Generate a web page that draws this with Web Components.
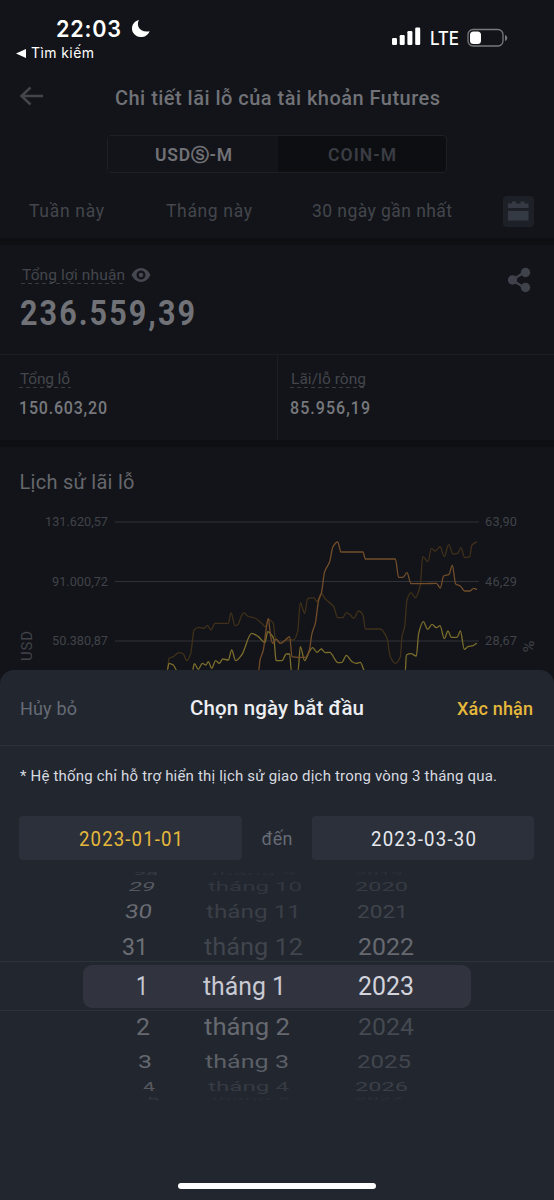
<!DOCTYPE html>
<html lang="vi">
<head>
<meta charset="utf-8">
<title>Chi tiết lãi lỗ</title>
<style>
html,body{margin:0;background:#121419}
body{width:554px;height:1200px;overflow:hidden;font-family:Roboto,"Noto Sans",sans-serif}
</style>
</head>
<body>
<pnl-app></pnl-app>
<script>
/* Single-line label. size/weight/color style it; w fits its advance width,
   by tracking or (with "stretch") by horizontal scaling; narrow condenses
   the glyphs before tracking. */
class UiText extends HTMLElement{
  connectedCallback(){
    const a=(n,d)=>this.getAttribute(n)||d;
    const root=this.attachShadow({mode:'open'});
    root.innerHTML=`<style>
      :host{display:block;flex:none;white-space:nowrap;line-height:1.2;font-size:${a('size','16')}px;font-weight:${a('weight','400')};color:${a('color','#707177')};font-family:${a('font','Roboto')},"Noto Sans","DejaVu Sans",sans-serif;width:max-content}
      span{display:inline-block;transform-origin:0 50%}
    </style><span><slot></slot></span>`;
    const s=root.querySelector('span'),w=+a('w',0),m=s.getBoundingClientRect().width;
    const n=this.textContent.length,k=+a('narrow',1);
    if(this.hasAttribute('stretch')){
      s.style.transform=`skewX(${a('skew','0')}deg) scale(${w?w/m:1},${a('sy','1')})`;
    }else if(w&&n>1){
      s.style.letterSpacing=(w/k-m)/(n-1)+'px';
      if(k!==1)s.style.transform=`scaleX(${k})`;
      this.style.width=w+'px';
    }
  }
}
customElements.define('ui-text',UiText);

const define=(name,css,html)=>customElements.define(name,class extends HTMLElement{
  constructor(){super();this.attachShadow({mode:'open'}).innerHTML=`<style>*{box-sizing:border-box}${css}</style>${html}`;}
});

define('status-bar',`
:host{display:block;height:66px}
.top{display:flex;height:45px;padding:12px 46px 0 56px;align-items:center}
.top svg{display:block}
.gap{flex:1}
.back{display:flex;align-items:center;padding-left:16px;height:17px;gap:5px}
`,`<div class="top">
<ui-text size="22.500" weight="600" font="Inter" color="#fff" w="65" narrow=".96">22:03</ui-text>
<svg width="20" height="20" viewBox="0 0 20 20" style="margin-left:10px"><path d="M8 1C5 6 8 14 18.7 12.2C16.5 17 12.5 18.3 9.4 18C4.5 17.6 1 14 1 9.5C1 5.500 3.500 2 8 1Z" fill="#fff"/></svg>
<div class="gap"></div>
<svg width="30" height="20" viewBox="0 0 30 20" style="margin:17px 0 0" fill="#fff"><rect x="0" y="11" width="5" height="7" rx="1.2"/><rect x="7.700" y="8" width="5" height="10" rx="1.2"/><rect x="15.400" y="4" width="5" height="14" rx="1.2"/><rect x="23.200" y="0.500" width="5" height="17.500" rx="1.2"/></svg>
<ui-text size="18.500" font="Inter" weight="500" color="#fff" w="29" narrow=".92" style="margin:20px 0 0 8px">LTE</ui-text>
<svg width="42" height="20" viewBox="0 0 42 20" style="margin:18px -1px 0 8px"><rect x="1" y="1.500" width="35" height="16.500" rx="5" fill="none" stroke="#77787c" stroke-width="1.300"/><rect x="3" y="3.500" width="11" height="12.500" rx="3.500" fill="#fff"/><path d="M38 7c3 1 3 5 0 6z" fill="#77787c"/></svg>
</div>
<div class="back"><svg width="10" height="9" viewBox="0 0 10 9"><path d="M0 4.500L10 0V9Z" fill="#fff"/></svg>
<ui-text size="14" font="Inter" weight="400" color="#fff" w="63">Tìm kiếm</ui-text></div>`);

define('nav-bar',`
:host{display:grid;grid-template-columns:115px auto 1fr;height:64px;align-items:center}
svg{display:block;margin-left:19px}
`,`<svg width="26" height="20" viewBox="0 0 26 20" style="margin-top:-4px" fill="none" stroke="#44454a" stroke-width="2.500"><path d="M24 10H3M11.500 1.500L2.500 10L11.500 18.500"/></svg>
<ui-text size="20" color="#717277" weight="500" w="325">Chi tiết lãi lỗ của tài khoản Futures</ui-text>`);

define('market-switch',`
:host{display:grid;grid-template-columns:170px 170px;width:340px;height:38px;margin:5px 0 0 107px;border:1px solid #1e2026;border-radius:4px;background:#0d0e12;overflow:hidden}
div{display:flex;align-items:center;justify-content:center;padding-top:2px}
.on{background:#131419}
`,`<div class="on"><ui-text size="17.500" weight="600" color="#707176" w="77" style="margin-left:1px">USDⓈ-M</ui-text></div><div><ui-text size="17.500" weight="600" color="#3b3d44" w="68" style="margin-right:2px">COIN-M</ui-text></div>`);

define('period-tabs',`
:host{display:grid;grid-template-columns:137px 146px 191px 31px;height:65px;padding:11px 0 0 29px;align-items:center;box-sizing:border-box}
svg{display:block}
`,`<ui-text size="17.500" color="#44464c" w="75">Tuần này</ui-text><ui-text size="17.500" color="#44464c" w="86">Tháng này</ui-text><ui-text size="17.500" color="#44464c" w="140">30 ngày gần nhất</ui-text>
<svg width="31" height="31" viewBox="0 0 31 31"><rect width="31" height="31" rx="4" fill="#1d2027"/><path d="M5 12V7.500H9V5.500H13V7.500H17.500V5.500H21.500V7.500H25.500V12ZM5 15H25.500V24.500H5Z" fill="#353943"/></svg>`);

define('dash-label',`
:host{display:block;width:max-content;padding:0 1px;height:18px;background:repeating-linear-gradient(90deg,#3a3c42 0 4px,transparent 4px 7px) 0 100%/100% 1px no-repeat}
`,`<slot></slot>`);

define('profit-panel',`
:host{display:block;height:209px;box-sizing:border-box;border-top:7px solid #0e0f13;border-bottom:7px solid #0e0f13}
.total{height:109px;display:flex;justify-content:space-between;padding:21px 23px 0 21px}
.lab{display:flex;gap:5px;align-items:center;height:18px}
.cells{display:grid;grid-template-columns:277px 1fr;border-top:1px solid #1b1d22;height:86px}
.cells>div{padding:15px 0 0 19px}
.cells>div+div{border-left:1px solid #1b1d22;padding-left:12px}
.v{margin-top:9px}
svg{display:block}
`,`<div class="total"><div><div class="lab"><dash-label><ui-text size="15.500" color="#44464c" w="103">Tổng lợi nhuận</ui-text></dash-label>
<svg width="20" height="16" viewBox="0 0 20 16"><path fill-rule="evenodd" d="M0.500 8Q4 1 10 1T19.500 8Q16 15 10 15T0.500 8ZM10 3.500A4.500 4.500 0 1 0 10 12.500A4.500 4.500 0 1 0 10 3.500Z" fill="#454850"/><circle cx="10" cy="8" r="2.300" fill="#454850"/></svg></div>
<ui-text size="35.500" weight="700" color="#717277" w="175" narrow=".86" style="margin:8px 0 0 -1px">236.559,39</ui-text></div>
<svg width="24" height="26" viewBox="0 0 24 26" style="margin-top:1px" fill="#3f424a"><path d="M5 13L18 5M5 13L18 21" stroke="#3f424a" stroke-width="2.500"/><circle cx="5.500" cy="13" r="4.700"/><circle cx="18.500" cy="5.500" r="4.700"/><circle cx="18.500" cy="20.500" r="4.700"/></svg></div>
<div class="cells"><div><dash-label><ui-text size="15.500" color="#44464c" w="50">Tổng lỗ</ui-text></dash-label><ui-text class="v" size="17.800" weight="500" color="#77787d" w="88" narrow=".9">150.603,20</ui-text></div>
<div><dash-label><ui-text size="15.500" color="#44464c" w="75">Lãi/lỗ ròng</ui-text></dash-label><ui-text class="v" size="17.800" weight="500" color="#77787d" w="80" narrow=".9">85.956,19</ui-text></div></div>`);

/* Series are stored at three units per pixel, in runs that share an origin. */
const SERIES=[
 ['#40301a',[[[0,450],'502,660 507,625 520,620 537,608 550,612 560,632 572,612 577,575 582,540 597,532 613,535 622,526 633,540 645,520 665,520 685,520 693,488 705,527 715,522 724,498 732,488 742,498 765,504 785,520 797,530 805,508 820,520 825,560'],[[277,500],'0,418 10,430 30,420 50,420 62,395 70,308 83,340 92,296 110,293 120,305 133,280 145,297 170,320 182,353 197,353 208,338 220,345 230,355 245,333 258,345 265,387 290,387 310,387 330,415 340,470 355,490 370,470 375,410 383,380 390,300 402,278 415,293 430,255 437,170 453,185 463,145 475,153 489,140 502,170 515,133 528,162 542,160 552,143 563,173 578,170 585,135 600,126']]],
 ['#7c6d2c',[[[0,450],'502,660 507,640 520,645 530,660'],[[0,0],''],[[0,450],'578,660 583,641 595,658 607,640 618,645 625,635 635,655 647,632 658,640 668,627 685,630 695,600 707,632 725,615 755,550 775,560 795,578 803,545 815,555 822,570 828,630'],[[277,500],'0,482 15,482 28,462 38,462 43,512'],[[0,0],''],[[277,500],'63,512 70,440 83,482 97,455 107,443 120,457 133,447 145,458 158,457 183,488 195,487 208,466 225,485 238,490 250,487 263,512'],[[0,0],''],[[277,500],'385,512 388,465 402,461 418,468 425,400 439,365 452,388 465,373 478,383 489,377 502,416 513,393 523,412 540,412 550,393 562,448 573,440 588,437 600,430']]],
 ['#724d29',[[[0,450],'776,662 780,630 790,600 798,540 805,505 812,560 818,580 828,568'],[[277,500],'10,430 25,420 38,410 45,470 65,472 85,472 97,450 105,400 115,370 125,300 133,280 143,215 158,185 168,140 182,126 192,156 225,156 258,156 265,177 310,177 355,177 365,232 378,232 390,218 402,251 440,251 478,250 490,264 500,228 516,223 526,196 536,252 550,258 563,273 578,273 590,265 600,268']]]
];
function curve(runs){
  const parts=[[]];
  for(const [o,t] of runs){
    if(!t){parts.push([]);continue;}
    for(const p of t.split(' ')){const [x,y]=p.split(',').map(Number);parts[parts.length-1].push([o[0]+x/3,o[1]+y/3]);}
  }
  return parts.map(p=>{
    const tan=i=>{
      if(i===0||i===p.length-1)return 0;
      const a=(p[i][1]-p[i-1][1])/(p[i][0]-p[i-1][0]),b=(p[i+1][1]-p[i][1])/(p[i+1][0]-p[i][0]);
      return a*b<=0?0:2*a*b/(a+b);
    };
    let d=`M${p[0]}`;
    for(let i=1;i<p.length;i++){
      const h=(p[i][0]-p[i-1][0])/3;
      d+=`C${p[i-1][0]+h},${p[i-1][1]+h*tan(i-1)} ${p[i][0]-h},${p[i][1]-h*tan(i)} ${p[i]}`;
    }
    return d;
  }).join('');
}

define('pnl-chart',`
:host{display:block;height:223px}
.title{height:53px;padding:22.500px 0 0 19.500px}
svg{display:block}
text{font-family:Roboto,sans-serif;font-size:12.700px;fill:#414349}
`,`<div class="title"><ui-text size="20" color="#66676c" w="115">Lịch sử lãi lỗ</ui-text></div>
<svg width="554" height="170" viewBox="0 500 554 170">
<path d="M115 522H479M115 581.500H479M115 641H479" stroke="#303238" stroke-width="1.100"/>
<g>${SERIES.map(([c,r])=>`<path d="${curve(r)}" fill="none" stroke="${c}" stroke-width="1.300"/>`).join('')}</g>
<text x="45" y="526.200" textLength="63">131.620,57</text><text x="52" y="585.700" textLength="56">91.000,72</text><text x="52" y="645" textLength="56">50.380,87</text>
<text x="485" y="526.200" textLength="32">63,90</text><text x="485" y="585.700" textLength="32">46,29</text><text x="485" y="645" textLength="32">28,67</text>
<text transform="translate(32 661) rotate(-90)" style="font-size:15px" textLength="30">USD</text>
<text transform="translate(533.500 652.500) rotate(-90)" style="font-size:14.500px" textLength="12" lengthAdjust="spacingAndGlyphs">%</text>
</svg>`);

define('date-field',`
:host{display:flex;align-items:center;justify-content:center;height:44px;border-radius:4px;background:#2b303b;padding-top:2px;box-sizing:border-box}
`,`<slot></slot>`);

/* Wheel rows: height, vertical scale, then [text, left, width, colour, skew] per column. */
const ROWS=[
 [6,.16,['28',134,24,'#3b3f47',-25],['tháng 9',211,85,'#2a2e36',0],['2019',355,48,'#2d3139',0]],
 [20,.5,['29',129,26,'#555860',-20],['tháng 10',208,94,'#333740',0],['2020',355,53,'#373b43',0]],
 [30,.77,['30',125,27,'#6a6c74',-8],['tháng 11',206,95,'#3b3f47',0],['2021',357,51,'#40444c',0]],
 [40,.96,['31',122,26,'#6b6e75',0],['tháng 12',204,99,'#41454d',0],['2022',358,56,'#666970',0]],
 [40,1.03,['1',136,12,'#c8c9d2',0],['tháng 1',203,83,'#c8c9d2',0],['2023',358,56,'#d2d3dc',0]],
 [40,.96,['2',136,14,'#666970',0],['tháng 2',204,86,'#666970',0],['2024',358,56,'#454951',0]],
 [30,.77,['3',138,14,'#666970',0],['tháng 3',205,84,'#5c6067',0],['2025',357,54,'#42464e',0]],
 [20,.5,['4',143,12,'#555860',8],['tháng 4',208,81,'#373b43',0],['2026',355,53,'#3b3f47',0]],
 [4,.16,['5',147,12,'#3b3f47',25],['tháng 5',211,79,'#2a2e36',0],['2027',355,48,'#2d3139',0]]
];
define('date-wheel',`
:host{display:block;position:relative;height:230px;overflow:hidden}
.band{position:absolute;left:0;right:0;top:91px;height:50px;border-top:1px solid #2e323b;border-bottom:1px solid #2e323b}
.pill{position:absolute;left:83px;top:3px;width:388px;height:43px;border-radius:9px;background:#31343f}
.wheel{padding-top:.7px}
.row{position:relative;display:grid;grid-template-columns:180px 150px 1fr;align-items:center;overflow:visible}
.row>div{min-height:0;height:0;display:flex;align-items:center}
`,`<div class="band"><div class="pill"></div></div><div class="wheel">${ROWS.map(([h,sy,...c])=>`<div class="row" style="height:${h}px">${c.map(([t,x,w,col,k],i)=>`<div style="padding-left:${x-[0,180,330][i]}px"><ui-text stretch size="25" sy="${sy}" w="${w}" skew="${k}" color="${col}">${t}</ui-text></div>`).join('')}</div>`).join('')}</div>`);

define('date-sheet',`
:host{display:flex;flex-direction:column;height:530px;background:#22262e;border-radius:14px 14px 0 0}
header{display:grid;grid-template-columns:170px 267px 1fr;align-items:center;height:76px;padding:2px 0 0 20px;border-bottom:1px solid #2c313a}
.note{padding:21px 0 0 20px;height:70px}
.range{display:grid;grid-template-columns:223px 1fr 222px;padding:0 20px 0 19px;height:54px}
.mid{display:flex;height:46px;align-items:center;justify-content:center}
.home{margin:83px 0 0 178px;width:198px;height:6px;border-radius:3px;background:#fff}
`,`<header><ui-text size="18" color="#666b76" w="57">Hủy bỏ</ui-text><ui-text size="20.500" weight="500" color="#eceef2" w="174">Chọn ngày bắt đầu</ui-text><ui-text size="18" weight="500" color="#e5b83c" w="76">Xác nhận</ui-text></header>
<div class="note"><ui-text size="15" color="#d7dae0" w="477">* Hệ thống chỉ hỗ trợ hiển thị lịch sử giao dịch trong vòng 3 tháng qua.</ui-text></div>
<div class="range"><date-field><ui-text size="20" color="#e5b83c" w="104" narrow=".93">2023-01-01</ui-text></date-field><div class="mid"><ui-text size="18" color="#666b76" w="31">đến</ui-text></div><date-field><ui-text size="20" color="#e6e8ed" w="105" narrow=".93">2023-03-30</ui-text></date-field></div>
<date-wheel></date-wheel><div class="home"></div>`);

define('pnl-app',`
:host{display:block;width:554px;height:1200px;background:#121419}
.behind{height:670px;overflow:hidden}
`,`<div class="behind"><status-bar></status-bar><nav-bar></nav-bar><market-switch></market-switch><period-tabs></period-tabs><profit-panel></profit-panel><pnl-chart></pnl-chart></div><date-sheet></date-sheet>`);
</script>
</body>
</html>
